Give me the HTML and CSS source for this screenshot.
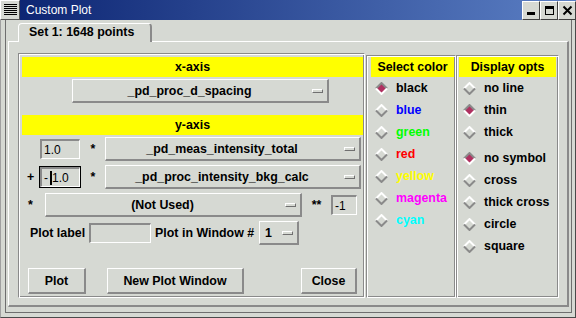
FILE: index.html
```html
<!DOCTYPE html>
<html>
  <head>
    <title>Custom Plot</title>
    <link rel="stylesheet" href="styles.css">
  </head>
  <body>
    <svg class="defs" width="0" height="0">
      <symbol id="dia-on" viewBox="0 0 13 13">
        <polygon points="6.5,1 12,6.5 6.5,12 1,6.5" fill="#b03060" />
        <path d="M1 6.5 L6.5 1 L12 6.5" fill="none" stroke="#8a8a8a" stroke-width="2" />
        <path d="M1 6.5 L6.5 12 L12 6.5" fill="none" stroke="#ffffff" stroke-width="2" />
      </symbol>
      <symbol id="dia-off" viewBox="0 0 13 13">
        <path d="M1 6.5 L6.5 1 L12 6.5" fill="none" stroke="#ffffff" stroke-width="2" />
        <path d="M1 6.5 L6.5 12 L12 6.5" fill="none" stroke="#8a8a8a" stroke-width="2" />
      </symbol>
    </svg>

    <div class="titlebar">
      <div class="wm-icon"><div class="wm-icon-lines"></div></div>
      <div class="wm-title">Custom Plot</div>
      <div class="wm-buttons">
        <div class="wm-btn">
          <svg width="11" height="11" viewBox="0 0 11 11"><rect x="1" y="7" width="8" height="3" fill="#000" /></svg>
        </div>
        <div class="wm-btn">
          <svg width="11" height="11" viewBox="0 0 11 11"><rect x="1.5" y="1.5" width="8" height="8" fill="none" stroke="#000" /><rect x="1" y="1" width="9" height="3" fill="#000" /></svg>
        </div>
        <div class="wm-btn">
          <svg width="11" height="11" viewBox="0 0 11 11"><path d="M1.5 1.5 L9.5 9.5 M9.5 1.5 L1.5 9.5" stroke="#000" stroke-width="2" /></svg>
        </div>
      </div>
    </div>

    <div class="frame">
      <div class="client">
        <div class="tabs">
          <div class="tab">Set 1: 1648 points</div>
        </div>
        <div class="panel">
          <div class="group axes">
            <div class="header">x-axis</div>
            <div class="xrow">
              <div class="mb mb-x"><span class="mb-label">_pd_proc_d_spacing</span><span class="ind"></span></div>
            </div>
            <div class="header header-y">y-axis</div>
            <div class="row row-first">
              <span class="sign"></span>
              <div class="ring"><div class="entry">1.0</div></div>
              <span class="star">*</span>
              <div class="mb mb-wide"><span class="mb-label">_pd_meas_intensity_total</span><span class="ind"></span></div>
            </div>
            <div class="row">
              <span class="sign">+</span>
              <div class="ring focus"><div class="entry">-<span class="cursor"></span>1.0</div></div>
              <span class="star">*</span>
              <div class="mb mb-wide"><span class="mb-label">_pd_proc_intensity_bkg_calc</span><span class="ind"></span></div>
            </div>
            <div class="row">
              <span class="sign">*</span>
              <div class="mb mb-unused"><span class="mb-label">(Not Used)</span><span class="ind"></span></div>
              <span class="stars">**</span>
              <div class="entry entry-small">-1</div>
            </div>
            <div class="row">
              <span class="label label-first">Plot label</span>
              <div class="entry entry-label"></div>
              <span class="label">Plot in Window #</span>
              <div class="mb mb-window"><span class="mb-num">1</span><span class="ind"></span></div>
            </div>
            <div class="btn-row">
              <div class="btn btn-plot">Plot</div>
              <div class="btn btn-new">New Plot Window</div>
              <div class="btn btn-close">Close</div>
            </div>
          </div>

          <div class="group colors">
            <div class="header">Select color</div>
            <div class="radio"><svg class="dia"><use href="#dia-on" /></svg><span>black</span></div>
            <div class="radio c-blue"><svg class="dia"><use href="#dia-off" /></svg><span>blue</span></div>
            <div class="radio c-green"><svg class="dia"><use href="#dia-off" /></svg><span>green</span></div>
            <div class="radio c-red"><svg class="dia"><use href="#dia-off" /></svg><span>red</span></div>
            <div class="radio c-yellow"><svg class="dia"><use href="#dia-off" /></svg><span>yellow</span></div>
            <div class="radio c-magenta"><svg class="dia"><use href="#dia-off" /></svg><span>magenta</span></div>
            <div class="radio c-cyan"><svg class="dia"><use href="#dia-off" /></svg><span>cyan</span></div>
          </div>

          <div class="group opts">
            <div class="header">Display opts</div>
            <div class="radio"><svg class="dia"><use href="#dia-off" /></svg><span>no line</span></div>
            <div class="radio"><svg class="dia"><use href="#dia-on" /></svg><span>thin</span></div>
            <div class="radio"><svg class="dia"><use href="#dia-off" /></svg><span>thick</span></div>
            <div class="radio radio-gap"><svg class="dia"><use href="#dia-on" /></svg><span>no symbol</span></div>
            <div class="radio"><svg class="dia"><use href="#dia-off" /></svg><span>cross</span></div>
            <div class="radio"><svg class="dia"><use href="#dia-off" /></svg><span>thick cross</span></div>
            <div class="radio"><svg class="dia"><use href="#dia-off" /></svg><span>circle</span></div>
            <div class="radio"><svg class="dia"><use href="#dia-off" /></svg><span>square</span></div>
          </div>
        </div>
      </div>
    </div>
  </body>
</html>
```

FILE: styles.css
```css
* {
  box-sizing: border-box;
}

body {
  margin: 0;
  width: 576px;
  height: 318px;
  overflow: hidden;
  background-color: #d6d9d3;
  font-family: "Liberation Sans", Arial, sans-serif;
  font-size: 12.4px;
  font-weight: bold;
  color: #000000;
}

.defs {
  position: absolute;
}

/* window manager decoration */
.titlebar {
  display: flex;
  align-items: center;
  height: 20px;
  background: linear-gradient(90deg, #0a2270, #5b7fc4);
}

.wm-icon {
  width: 20px;
  height: 20px;
  padding: 3px 2px 3px 3px;
  background-color: #d6d9d3;
  border: 1px solid;
  border-color: #ffffff #555555 #555555 #ffffff;
}

.wm-icon-lines {
  height: 100%;
  background: repeating-linear-gradient(#000000 0 1px, transparent 1px 2px);
}

.wm-title {
  flex: 1;
  padding-left: 6px;
  color: #ffffff;
  font-size: 12px;
  font-weight: normal;
}

.wm-buttons {
  display: flex;
  align-self: stretch;
  padding-top: 1px;
}

.wm-btn {
  display: flex;
  align-items: center;
  justify-content: center;
  width: 18px;
  height: 19px;
  background-color: #d6d9d3;
  border: 1px solid;
  border-color: #ffffff #404040 #404040 #ffffff;
}

.frame {
  height: 298px;
  padding: 0 3px 4px 4px;
  border: 1px solid #4a4a4a;
  border-top: 0;
  border-left-color: #a0a0a0;
}

.client {
  display: flex;
  flex-direction: column;
  height: 100%;
  padding: 3px 2px 5px 2px;
  border: 1px solid #6e6e6e;
  border-top: 0;
}

/* notebook */
.tabs {
  display: flex;
  padding-left: 10px;
  margin-bottom: -1px;
  position: relative;
  z-index: 1;
}

.tab {
  width: 134px;
  height: 19px;
  padding-left: 10px;
  line-height: 17px;
  white-space: nowrap;
  background-color: #d6d9d3;
  border-style: solid;
  border-width: 1px 2px 0 1px;
  border-color: #ffffff #8a8a8a #ffffff #ffffff;
  border-radius: 4px 4px 0 0;
}

.panel {
  flex: 1;
  display: flex;
  padding: 11px 8px 7px 9px;
  border-style: solid;
  border-width: 1px 2px 2px 1px;
  border-color: #ffffff #8a8a8a #8a8a8a #ffffff;
}

.group {
  display: flex;
  flex-direction: column;
  border: 1px solid;
  border-color: #8a8a8a #ffffff #ffffff #8a8a8a;
  box-shadow: inset 1px 1px #ffffff, inset -1px -1px #8a8a8a;
}

.axes {
  width: 347px;
  margin-right: 1px;
  padding: 3px 1px 3px 3px;
}

.colors {
  width: 90px;
  margin-top: 2px;
  padding: 1px 1px 0 4px;
}

.opts {
  width: 103px;
  margin-top: 2px;
  padding: 1px 2px 0 2px;
}

.header {
  flex-shrink: 0;
  height: 20px;
  line-height: 20px;
  text-align: center;
  white-space: nowrap;
  background-color: #ffff00;
}

.header-y {
  margin-top: 12px;
}

/* tk widgets */
.mb {
  display: flex;
  align-items: center;
  height: 24px;
  border-style: solid;
  border-width: 1px 2px 2px 1px;
  border-color: #ffffff #8a8a8a #8a8a8a #ffffff;
}

.mb-label {
  flex: 1;
  text-align: center;
  white-space: nowrap;
}

.ind {
  flex-shrink: 0;
  width: 11px;
  height: 4px;
  margin: 0 4px 0 6px;
  border: 1px solid;
  border-color: #ffffff #707070 #707070 #ffffff;
}

.xrow {
  display: flex;
  margin-top: 2px;
}

.mb-x {
  width: 257px;
  margin-left: 50px;
}

.row {
  display: flex;
  align-items: center;
  height: 24px;
  margin-top: 4px;
}

.row-first {
  margin-top: 2px;
}

.sign {
  flex-shrink: 0;
  width: 17px;
  text-align: center;
}

.star {
  flex-shrink: 0;
  width: 24px;
  text-align: center;
}

.stars {
  flex-shrink: 0;
  width: 29px;
  text-align: center;
}

.ring {
  padding: 1px;
  width: 42px;
  height: 22px;
}

.ring.focus {
  background-color: #000000;
}

.entry {
  display: flex;
  align-items: center;
  height: 20px;
  padding-left: 2px;
  font-size: 12px;
  font-weight: normal;
  background-color: #d6d9d3;
  border-style: solid;
  border-width: 2px 1px 1px 2px;
  border-color: #8a8a8a #ffffff #ffffff #8a8a8a;
}

.cursor {
  display: inline-block;
  width: 2px;
  height: 14px;
  margin: 0 0 0 2px;
  background-color: #000000;
}

.mb-wide {
  flex: 1;
  margin-right: 2px;
}

.mb-unused {
  width: 257px;
  margin-left: 6px;
}

.entry-small {
  width: 26px;
}

.label {
  margin-left: 4px;
  white-space: nowrap;
}

.label-first {
  margin-left: 8px;
}

.entry-label {
  width: 62px;
  margin-left: 4px;
}

.mb-window {
  width: 40px;
  margin-left: 5px;
}

.mb-num {
  padding-left: 5px;
  margin-right: auto;
}

.btn-row {
  display: flex;
  height: 26px;
  margin-top: auto;
  padding: 0 6px;
}

.btn {
  display: flex;
  align-items: center;
  justify-content: center;
  white-space: nowrap;
  border-style: solid;
  border-width: 1px 2px 2px 1px;
  border-color: #ffffff #8a8a8a #8a8a8a #ffffff;
}

.btn-plot {
  width: 58px;
}

.btn-new {
  width: 137px;
  margin-left: 21px;
}

.btn-close {
  width: 56px;
  margin-left: auto;
}

/* radio lists */
.radio {
  display: flex;
  align-items: center;
  height: 22px;
  padding-left: 4px;
  white-space: nowrap;
}

.radio-gap {
  margin-top: 4px;
}

.dia {
  flex-shrink: 0;
  width: 13px;
  height: 13px;
  margin-right: 8px;
}

.c-blue { color: #0000ff; }
.c-green { color: #00ff00; }
.c-red { color: #ff0000; }
.c-yellow { color: #ffff00; }
.c-magenta { color: #ff00ff; }
.c-cyan { color: #00ffff; }
```
